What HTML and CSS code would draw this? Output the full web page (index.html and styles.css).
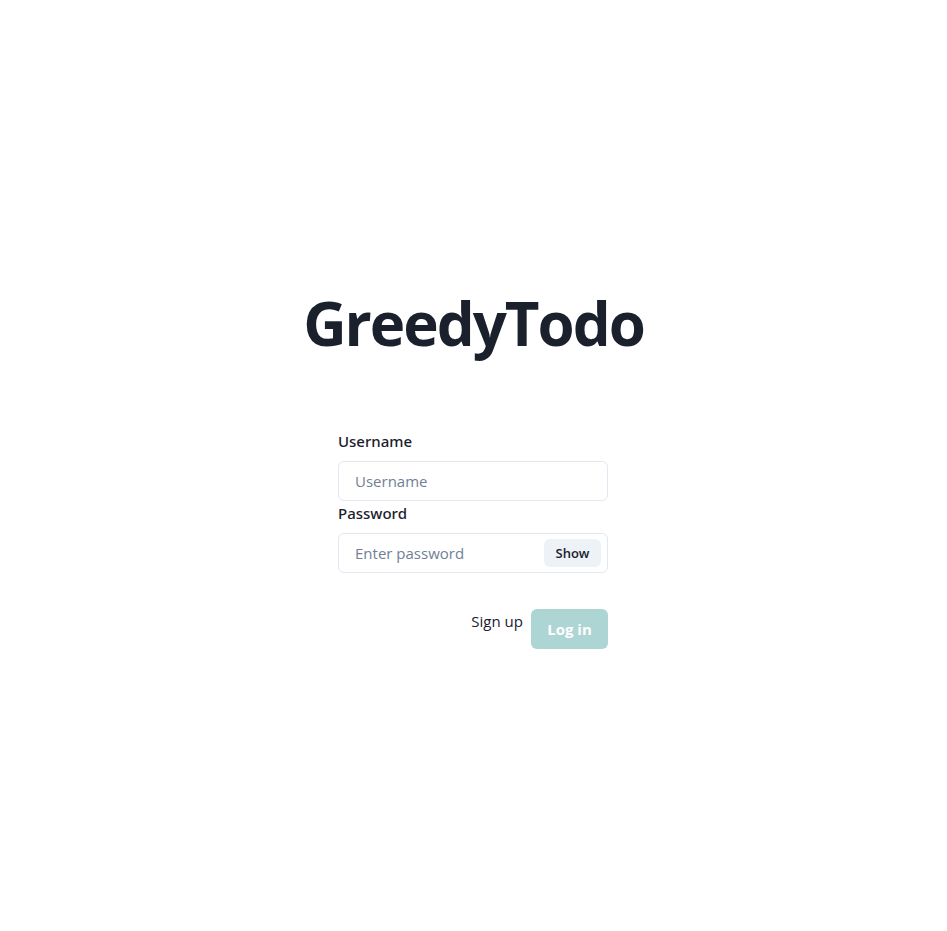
FILE: index.html
```html
<!DOCTYPE html>
<html>
<head>
<meta charset="utf-8">
<link rel="stylesheet" href="styles.css">
</head>
<body>
<main class="page">
  <h1 class="title">GreedyTodo</h1>
  <form class="form">
    <label class="label" for="u">Username</label>
    <input class="input" id="u" placeholder="Username">
    <label class="label" for="p">Password</label>
    <div class="pw-group">
      <input class="input input-pw" id="p" type="password" placeholder="Enter password">
      <button type="button" class="show-btn">Show</button>
    </div>
    <div class="actions">
      <a class="signup">Sign up</a>
      <button type="button" class="login-btn" disabled>Log in</button>
    </div>
  </form>
</main>
</body>
</html>
```
FILE: styles.css
```css
html, body {
  margin: 0;
  padding: 0;
  background: #ffffff;
}
body {
  font-family: "Open Sans", "Noto Sans", sans-serif;
  color: #1a202c;
}
.page {
  display: flex;
  flex-direction: column;
  align-items: center;
  padding-top: 287px;
}
.title {
  margin: 0;
  font-size: 60px;
  line-height: 72px;
  font-weight: 700;
  color: #1a202c;
  letter-spacing: -2px;
}
.form {
  width: 270px;
  margin-top: 70px;
  margin-right: 1px;
  display: flex;
  flex-direction: column;
}
.label {
  font-family: "Noto Sans", "Open Sans", sans-serif;
  font-size: 15px;
  font-weight: 500;
  line-height: 24px;
  margin-bottom: 8px;
}
.input {
  box-sizing: border-box;
  width: 100%;
  height: 40px;
  border: 1px solid #e2e8f0;
  border-radius: 6px;
  padding: 0 16px;
  font-family: inherit;
  font-size: 15px;
  color: #1a202c;
  outline: none;
  background: #fff;
}
.input::placeholder {
  color: #718096;
}
.pw-group {
  position: relative;
  width: 100%;
}
.input-pw {
  padding-right: 72px;
}
.show-btn {
  position: absolute;
  right: 7px;
  top: 6px;
  height: 28px;
  width: 57px;
  border: none;
  border-radius: 6px;
  background: #edf2f7;
  font-family: inherit;
  font-size: 13px;
  font-weight: 600;
  color: #1a202c;
  padding: 0;
}
.actions {
  display: flex;
  justify-content: flex-end;
  align-items: flex-start;
  gap: 8px;
  margin-top: 36px;
}
.signup {
  font-size: 15px;
  line-height: 24px;
  color: #1a202c;
}
.login-btn {
  height: 40px;
  width: 77px;
  border: none;
  border-radius: 6px;
  background: #319795;
  opacity: 0.4;
  color: #fff;
  font-family: inherit;
  font-size: 15px;
  font-weight: 700;
  padding: 0;
}
```
